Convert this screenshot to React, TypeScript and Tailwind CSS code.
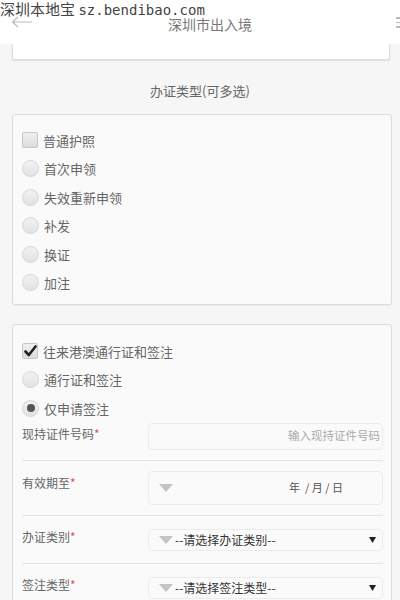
import React from "react";

const font = { fontFamily: '"Noto Sans CJK SC", "Noto Sans", sans-serif' };

function Check({ checked }: { checked?: boolean }) {
  return (
    <div className="w-[16px] h-[16px] rounded-[2px] border border-[#c8c8c8] bg-gradient-to-b from-[#f0f0f0] to-[#dcdcdc] flex items-center justify-center shrink-0">
      {checked && (
        <svg width="13" height="12" viewBox="0 0 13 12">
          <path d="M1.5 6.5 L4.8 10 L11.5 1.5" fill="none" stroke="#222" strokeWidth="2.6" strokeLinecap="round" strokeLinejoin="round" />
        </svg>
      )}
    </div>
  );
}

function Radio({ on }: { on?: boolean }) {
  return (
    <div className="w-[17px] h-[17px] rounded-full border border-[#d6d6d6] bg-gradient-to-b from-[#f2f2f2] to-[#e2e2e2] flex items-center justify-center shrink-0">
      {on && <div className="w-[8px] h-[8px] rounded-full bg-[#555]" />}
    </div>
  );
}

function Opt({ children, kind, on }: { children: React.ReactNode; kind: "c" | "r"; on?: boolean }) {
  return (
    <div className="flex items-center h-[28.5px] gap-[5px]">
      {kind === "c" ? <Check checked={on} /> : <Radio on={on} />}
      <span className="text-[13px] text-[#666] leading-none">{children}</span>
    </div>
  );
}

function Tri() {
  return <div className="w-0 h-0 border-l-[7px] border-r-[7px] border-t-[8px] border-l-transparent border-r-transparent border-t-[#c4c4c4]" />;
}

function Arrow() {
  return (
    <svg width="7" height="6" viewBox="0 0 7 6">
      <path d="M0 0 H7 L3.5 6 Z" fill="#222" />
    </svg>
  );
}

function Label({ children, mt }: { children: React.ReactNode; mt: string }) {
  return (
    <div className={`w-[126px] text-[12px] leading-[16px] text-[#666] shrink-0 ${mt}`}>
      {children}
      <span className="text-[#e05555]">*</span>
    </div>
  );
}

export default function App() {
  return (
    <div className="w-[400px] h-[600px] overflow-hidden bg-[#f6f6f6] relative" style={font}>
      <div className="absolute left-0 top-0 z-10 text-[15px] text-[#444] leading-[17px] whitespace-nowrap">
        深圳本地宝 <span style={{ fontFamily: '"DejaVu Sans Mono", monospace' }} className="text-[14px]">sz.bendibao.com</span>
      </div>
      <div className="h-[44px] bg-white flex items-center relative">
        <svg className="absolute left-[11px] top-[16px]" width="22" height="12" viewBox="0 0 22 12">
          <path d="M21 6 H2 M7 1 L1.5 6 L7 11" fill="none" stroke="#bbb" strokeWidth="1.2" />
        </svg>
        <div className="w-full text-center text-[14px] text-[#777] mt-[4px] pl-[20px]">深圳市出入境</div>
        <div className="absolute right-[-2px] top-[17px] flex flex-col gap-[3px]">
          <div className="w-[6px] h-[1.5px] bg-[#bbb]" />
          <div className="w-[6px] h-[1.5px] bg-[#bbb]" />
          <div className="w-[6px] h-[1.5px] bg-[#bbb]" />
        </div>
      </div>
      <div className="ml-[12px] mr-[10px] h-[16px] bg-white border border-t-0 border-[#ddd] rounded-b-[3px] shadow-[0_1px_2px_rgba(0,0,0,0.1)]" />
      <div className="text-center text-[13px] text-[#666] mt-[21px] leading-[20px]">办证类型(可多选)</div>
      <div className="ml-[12px] mr-[8px] mt-[13px] h-[191px] bg-[#fafafa] border border-[#dcdcdc] rounded-[3px] pl-[9px] pt-[11px] shadow-[0_1px_1px_rgba(0,0,0,0.05)]">
        <Opt kind="c">普通护照</Opt>
        <Opt kind="r">首次申领</Opt>
        <Opt kind="r">失效重新申领</Opt>
        <Opt kind="r">补发</Opt>
        <Opt kind="r">换证</Opt>
        <Opt kind="r">加注</Opt>
      </div>
      <div className="ml-[12px] mr-[8px] mt-[19px] bg-[#fafafa] border border-[#dcdcdc] rounded-[3px] pt-[12px] pr-[8px] pl-[9px]">
        <Opt kind="c" on>往来港澳通行证和签注</Opt>
        <Opt kind="r">通行证和签注</Opt>
        <Opt kind="r" on>仅申请签注</Opt>
        <div className="flex items-start h-[37px] border-b border-[#e4e4e4] box-content">
          <Label mt="mt-[3px]">现持证件号码</Label>
          <div className="flex-1 h-[27px] border border-[#ececec] rounded-[4px] bg-[#fafafa] flex items-center justify-end pr-[2px] text-[11.5px] text-[#aaa]">
            输入现持证件号码
          </div>
        </div>
        <div className="flex items-start h-[54px] border-b border-[#e4e4e4] box-content">
          <Label mt="mt-[14px]">有效期至</Label>
          <div className="mt-[10px] flex-1 h-[34px] border border-[#ececec] rounded-[4px] bg-[#fafafa] flex items-center pl-[10px] text-[11px] text-[#555]">
            <Tri />
            <span className="ml-[116px] whitespace-pre">年  / 月 / 日</span>
          </div>
        </div>
        <div className="flex items-start h-[47px] border-b border-[#e4e4e4] box-content">
          <Label mt="mt-[13px]">办证类别</Label>
          <div className="mt-[13px] flex-1 h-[22px] border border-[#ececec] rounded-[5px] bg-[#fafafa] flex items-center pl-[10px] pr-[6px] text-[12px] text-[#333]">
            <Tri />
            <span className="ml-[2px] flex-1">--请选择办证类别--</span>
            <Arrow />
          </div>
        </div>
        <div className="flex items-start h-[47px]">
          <Label mt="mt-[13px]">签注类型</Label>
          <div className="mt-[13px] flex-1 h-[22px] border border-[#ececec] rounded-[5px] bg-[#fafafa] flex items-center pl-[10px] pr-[6px] text-[12px] text-[#333]">
            <Tri />
            <span className="ml-[2px] flex-1">--请选择签注类型--</span>
            <Arrow />
          </div>
        </div>
      </div>
    </div>
  );
}
